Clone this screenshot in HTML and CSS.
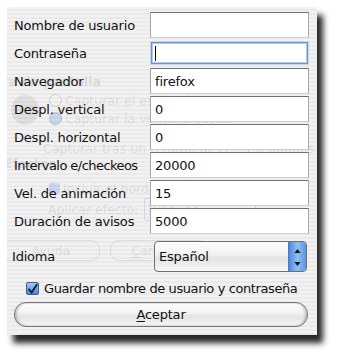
FILE: index.html
```html
<!DOCTYPE html>
<html lang="es">
<head>
<meta charset="utf-8">
<link rel="stylesheet" href="styles.css">
</head>
<body>
<div class="window">
  <div class="ghost">
    <span class="g g1">Captura de pantalla</span>
    <span class="gear"></span>
    <span class="g g2"><span class="radio"></span>Capturar el escritorio completo</span>
    <span class="g g3"><span class="radio on"></span>Capturar la ventana actual</span>
    <span class="g g4">Capturar tras un retardo de <span class="gbox">2</span> segundos</span>
    <span class="g g5">Efectos</span>
    <span class="g g6"><span class="gcheck"></span>Incluir el borde de la ventana</span>
    <span class="g g7">Aplicar efecto: <span class="gbox wide">Ninguno</span></span>
    <span class="g g8"><span class="gbtn">Ayuda</span><span class="gbtn"><u>C</u>ancelar</span></span>
  </div>
  <form class="form">
    <div class="grid">
      <label class="lbl">Nombre de usuario</label><div class="field"></div>
      <label class="lbl">Contraseña</label><div class="field focus"><span class="caret"></span></div>
      <label class="lbl">Navegador</label><div class="field">firefox</div>
      <label class="lbl">Despl. vertical</label><div class="field">0</div>
      <label class="lbl">Despl. horizontal</label><div class="field">0</div>
      <label class="lbl tight">Intervalo e/checkeos</label><div class="field">20000</div>
      <label class="lbl">Vel. de animación</label><div class="field">15</div>
      <label class="lbl">Duración de avisos</label><div class="field">5000</div>
    </div>
    <div class="lang">
      <span class="lbl-plain">Idioma</span>
      <div class="select">
        <span class="sel-text">Español</span>
        <span class="stepper">
          <svg width="7" height="24" viewBox="0 0 7 24"><path d="M3.5 4 L6.5 8 L0.5 8 Z" fill="#111"/><path d="M0.5 17 L6.5 17 L3.5 21 Z" fill="#111"/></svg>
        </span>
      </div>
    </div>
    <div class="check">
      <span class="box"><svg width="13" height="13" viewBox="0 0 13 13"><path d="M2.5 6.5 L5.5 10 L11.5 1" stroke="#0a1a3a" stroke-width="2.2" fill="none" stroke-linecap="round"/></svg></span>
      <span class="check-text">Guardar nombre de usuario y contraseña</span>
    </div>
    <div class="btn"><span><u>A</u>ceptar</span></div>
  </form>
</div>
</body>
</html>
```

FILE: styles.css
```css
html, body {
  margin: 0;
  padding: 0;
  background: #ffffff;
  width: 340px;
  height: 359px;
  overflow: hidden;
}
body {
  font-family: "DejaVu Sans", "Liberation Sans", sans-serif;
  font-size: 13px;
  letter-spacing: -0.2px;
  color: #111;
}
.window {
  position: relative;
  margin: 7px 0 0 7px;
  width: 310px;
  height: 328px;
  box-sizing: border-box;
  background: repeating-linear-gradient(to bottom, #f2f2f2 0px, #f2f2f2 2px, #eaeaea 2px, #eaeaea 4px);
  box-shadow: 6px 8px 6px rgba(0,0,0,0.85);
}
.ghost {
  position: absolute;
  inset: 0;
  overflow: hidden;
  color: rgba(0,0,0,0.1);
  font-size: 12.5px;
  letter-spacing: 0;
}
.g { position: absolute; white-space: nowrap; display: flex; align-items: center; gap: 3px; line-height: 15px; }
.g1 { left: -46px; top: 67px; font-weight: bold; }
.gear { position: absolute; left: 4px; top: 88px; width: 28px; height: 30px; border-radius: 50%; background: rgba(0,0,0,0.07); }
.radio { display: inline-block; width: 11px; height: 11px; border-radius: 50%; border: 1px solid rgba(0,0,0,0.13); }
.radio.on { background: rgba(60,120,220,0.22); }
.gcheck { display: inline-block; width: 11px; height: 11px; border-radius: 2px; background: rgba(60,120,220,0.22); }
.g2 { left: 42px; top: 86px; }
.g3 { left: 42px; top: 104px; }
.g4 { left: 36px; top: 130px; }
.g5 { left: -3px; top: 149px; font-weight: bold; }
.g6 { left: 42px; top: 174px; }
.g7 { left: 41px; top: 191px; }
.g8 { left: -5px; top: 233px; gap: 10px; }
.gbox { display: inline-block; border: 1px solid rgba(90,140,220,0.22); border-radius: 2px; padding: 3px 16px 3px 3px; margin: 0 2px; }
.gbox.wide { padding-right: 55px; }
.gbtn { display: inline-block; width: 96px; text-align: center; border: 1px solid rgba(0,0,0,0.09); border-radius: 9px; padding: 2px 0; }
.form {
  position: relative;
  padding: 5px 8px 0 5px;
  display: flex;
  flex-direction: column;
}
.grid {
  display: grid;
  grid-template-columns: 138px 159px;
  grid-auto-rows: 26px;
  row-gap: 2px;
}
.lbl {
  display: flex;
  align-items: center;
  padding-left: 2px;
  white-space: nowrap;
}
.lbl.tight { letter-spacing: -0.55px; }
.field {
  box-sizing: border-box;
  background: #fff;
  border: 1px solid #a8a8a8;
  border-top: 1px solid #707070;
  border-bottom-color: #cfcfcf;
  display: flex;
  align-items: center;
  padding-left: 4px;
}
.field.focus {
  border: 1px solid #7394c6;
  box-shadow: inset 0 0 0 1px #b0c9ea, 0 0 0 1px #c3d6ee;
  margin: 2px 1px 2px 1px;
}
.caret {
  display: block;
  width: 1px;
  height: 15px;
  background: #000;
  margin-left: -1px;
}
.lang {
  display: flex;
  align-items: center;
  margin-top: 7px;
  height: 31px;
}
.lbl-plain {
  width: 142px;
}
.select {
  box-sizing: border-box;
  width: 153px;
  height: 31px;
  border: 1px solid #6f6f6f;
  border-radius: 4px;
  background: linear-gradient(to bottom, #fdfdfd 0%, #f1f1f1 45%, #e4e4e4 55%, #f6f6f6 100%);
  display: flex;
  align-items: center;
  justify-content: space-between;
  padding-left: 4px;
}
.stepper {
  width: 18px;
  height: 29px;
  border-radius: 0 3px 3px 0;
  background: linear-gradient(to right, #4f88dc, #8ec0f7 50%, #5a93e2);
  border-left: 1px solid #4a79c0;
  box-sizing: border-box;
  display: flex;
  align-items: center;
  justify-content: center;
}
.check {
  display: flex;
  align-items: center;
  gap: 5px;
  margin-top: 5px;
  padding-left: 14px;
  height: 22px;
  white-space: nowrap;
  letter-spacing: -0.4px;
}
.box {
  box-sizing: border-box;
  width: 13px;
  height: 13px;
  border: 1px solid #3b5d8f;
  border-radius: 2px;
  background: linear-gradient(to bottom, #a3c8f4, #4a84d6);
  display: flex;
}
.btn {
  box-sizing: border-box;
  margin-top: 3px;
  margin-left: 2px;
  width: 294px;
  height: 25px;
  border: 1px solid #777;
  border-radius: 12px;
  background: linear-gradient(to bottom, #ffffff 0%, #f3f3f3 40%, #e4e4e4 60%, #f6f6f6 100%);
  display: flex;
  align-items: center;
  justify-content: center;
  box-shadow: inset 2px 0 2px rgba(0,0,0,0.2), inset -2px 0 2px rgba(0,0,0,0.2);
}
.btn u, .g8 u { text-decoration-thickness: 1px; text-underline-offset: 2px; }
```
